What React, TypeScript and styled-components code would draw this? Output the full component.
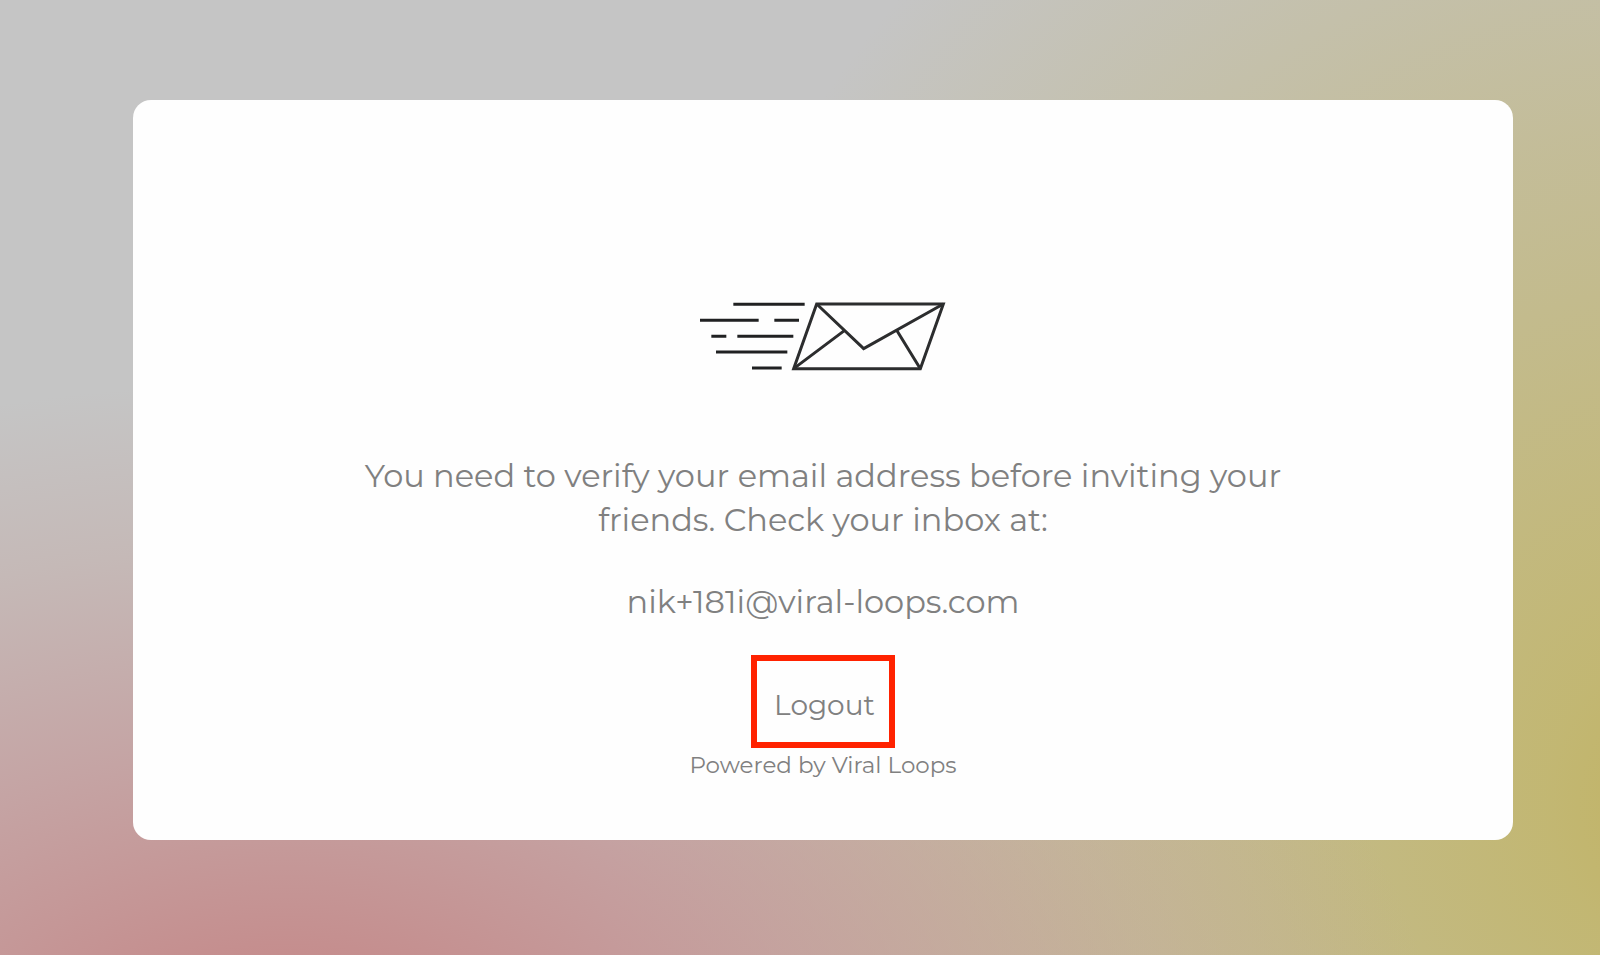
import React from "react";
import styled, { createGlobalStyle } from "styled-components";

const GlobalStyle = createGlobalStyle`
  *, *::before, *::after { box-sizing: border-box; }
  body {
    margin: 0;
    font-family: Montserrat, Inter, "Liberation Sans", sans-serif;
    color: #808080;
  }
`;

const Page = styled.div`
  display: flex;
  min-height: 100vh;
  padding: 100px 87px 115px 133px;
  background:
    radial-gradient(ellipse 72% 72% at 18% 112%, #c58585 0%, rgba(197, 138, 138, 0.92) 18%, rgba(197, 146, 146, 0.66) 46%, rgba(197, 162, 156, 0.34) 76%, rgba(197, 197, 197, 0) 100%),
    radial-gradient(ellipse 68% 124% at 106% 84%, #c1b262 0%, rgba(194, 182, 108, 0.92) 14%, rgba(194, 182, 116, 0.56) 56%, rgba(197, 197, 197, 0) 100%),
    #c5c5c5;
`;

const Card = styled.main`
  display: flex;
  flex: 1;
  flex-direction: column;
  align-items: center;
  padding: 190px 24px 56px;
  border-radius: 18px;
  background: #fefefe;
`;

const Illustration = styled.svg`
  width: 267px;
  height: 90px;
  fill: none;
  stroke: #2c2d2e;
  stroke-width: 9;
`;

const Message = styled.p<{ $gap: number }>`
  max-width: 960px;
  margin: ${({ $gap }) => $gap}px 0 0;
  font-size: 32px;
  line-height: 44px;
  text-align: center;
`;

const LogoutButton = styled.button`
  margin-top: 31px;
  padding: 18px 14px 11px 17px;
  border: 6px solid #ff2200;
  background: transparent;
  color: inherit;
  font: inherit;
  font-size: 28px;
  line-height: 52px;
  cursor: pointer;
`;

const Credit = styled.footer`
  font-size: 23px;
  line-height: 34px;
`;

export default function App() {
  return (
    <>
      <GlobalStyle />
      <Page>
        <Card>
          <Illustration viewBox="0 0 801 270" role="img" aria-label="Email on its way">
            <path d="M130 43H344M30 91H206M253 91H327M64 139H109M142 139H310M78 186H292M186 234H275" stroke="#202122" />
            <path d="M380 42H760L691 236H311Z" />
            <path d="M380 42L521 176L760 42M311 236L463 122M691 236L621 122" />
          </Illustration>
          <Message $gap={74}>
            You need to verify your email address before inviting your friends. Check your inbox at:
          </Message>
          <Message $gap={38}>nik+181i@viral-loops.com</Message>
          <LogoutButton type="button">Logout</LogoutButton>
          <Credit>Powered by Viral Loops</Credit>
        </Card>
      </Page>
    </>
  );
}
